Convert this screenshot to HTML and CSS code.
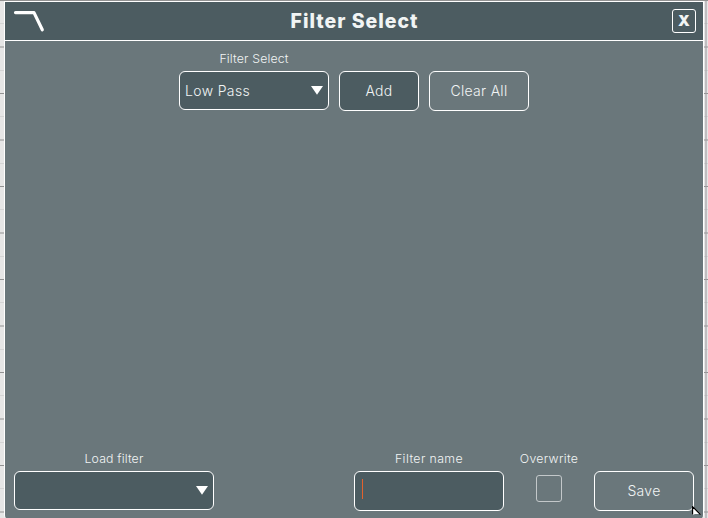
FILE: index.html
```html
<!DOCTYPE html>
<html lang="en">
<head>
<meta charset="utf-8">
<title>Filter Select</title>
<link rel="stylesheet" href="styles.css">
</head>
<body>
<main class="window">
  <header class="titlebar">
    <svg class="logo" width="32" height="24" viewBox="0 0 32 24"><path d="M2.5 3.6H21L29.3 20.8" fill="none" stroke="#fff" stroke-width="3.2" stroke-linecap="round" stroke-linejoin="round"/></svg>
    <h1 class="title">Filter Select</h1>
    <button class="close">X</button>
  </header>
  <section class="toolbar">
    <div class="field">
      <span class="label label-select">Filter Select</span>
      <div class="select select-type"><span class="value">Low Pass</span><svg class="arrow" width="12" height="9" viewBox="0 0 12 9"><path d="M0 0H12L6 8.8Z" fill="#fff"/></svg></div>
    </div>
    <button class="button button-add"><span class="add">Add</span></button>
    <button class="button button-clear"><span class="clear">Clear All</span></button>
  </section>
  <section class="footer">
    <div class="field load">
      <span class="label label-load">Load filter</span>
      <div class="select select-load"><svg class="arrow" width="12" height="9" viewBox="0 0 12 9"><path d="M0 0H12L6 8.8Z" fill="#fff"/></svg></div>
    </div>
    <div class="field name">
      <span class="label label-name">Filter name</span>
      <div class="input"><i class="caret"></i></div>
    </div>
    <div class="field overwrite">
      <span class="label label-over">Overwrite</span>
      <div class="checkbox"></div>
    </div>
    <button class="button button-save"><span class="save">Save</span></button>
  </section>
</main>
<svg class="cursor" width="10" height="13" viewBox="0 0 10 13"><path d="M.5 0V9L3 8H9Z" fill="#fff"/><path d="M.5 0V8.5M.5 .5L8.5 8.5" fill="none" stroke="#000" stroke-width="1.3"/></svg>
</body>
</html>
```
FILE: styles.css
```css
* { box-sizing: border-box; }
html { height: 100%; overflow: hidden; }
body {
  margin: 0;
  height: 518px;
  overflow: hidden;
  padding: 1px 4px 0;
  font-family: Inter, "Open Sans", sans-serif;
  font-weight: 350;
  color: #f1f4f4;
  background:
    linear-gradient(#929292, #929292) 0 0 / 100% 1px no-repeat,
    linear-gradient(90deg, transparent 705px, rgba(160,155,160,.55) 705px, rgba(160,155,160,.55) 707px, transparent 707px),
    repeating-linear-gradient(transparent 0 23px, #d5d5d5 23px 24px, transparent 24px 46px, #bcbcbc 46px 48px, transparent 48px 70px, #d5d5d5 70px 71px, transparent 71px 93px) 0 0,
    repeating-linear-gradient(#929292 0 1px, #e6e6e6 1px 93px);
}
.window {
  height: 518px;
  display: flex;
  flex-direction: column;
  border: 1px solid #fff;
  border-bottom: 0;
  border-radius: 0 0 4px 4px;
  background: #6a777b;
}
.titlebar {
  height: 39px;
  flex: none;
  display: grid;
  grid-template-columns: 40px 1fr 40px;
  align-items: center;
  padding: 0 7px 1px 8px;
  background: #4c5c61;
  border-bottom: 1px solid #fff;
}
.title {
  margin: 0;
  text-align: center;
  font-size: 19.5px;
  line-height: 24px;
  font-weight: 800;
  letter-spacing: 1px;
  white-space: nowrap;
}
.logo { display: block; }
button { font-family: inherit; font-weight: inherit; color: inherit; padding: 0; }
.close {
  justify-self: end;
  width: 24px;
  height: 24px;
  border: 1px solid #fff;
  border-radius: 3px;
  background: transparent;
  font-size: 15px;
  font-weight: 900;
  line-height: 20px;
}
.toolbar {
  display: flex;
  justify-content: center;
  align-items: flex-start;
  gap: 10px;
  padding-top: 9px;
}
.field { display: flex; flex-direction: column; align-items: center; }
.label {
  height: 21px;
  font-size: 12.3px;
  line-height: 17px;
  letter-spacing: .15px;
  white-space: nowrap;
}
.select, .input {
  display: flex;
  align-items: center;
  border: 1px solid #fff;
  border-radius: 6px;
  background: #4c5c61;
}
.select {
  height: 39px;
  justify-content: space-between;
  padding: 0 5px;
  font-size: 14px;
  letter-spacing: .35px;
}
.value { padding-bottom: 1px; }
.select-type { width: 150px; }
.select-load { width: 200px; }
.arrow { margin-left: auto; }
.button {
  height: 40px;
  margin-top: 21px;
  padding-bottom: 2px;
  border: 1px solid #fff;
  border-radius: 6px;
  background: transparent;
  font-size: 14px;
  letter-spacing: .3px;
}
.button-add { width: 80px; background: #4c5c61; }
.button-clear { width: 100px; }
.button-save { width: 100px; }
.footer {
  display: flex;
  align-items: flex-start;
  margin-top: auto;
  padding: 0 9px 8px;
}
.name { margin-left: 140px; }
.label-name { letter-spacing: .4px; }
.input { width: 150px; height: 40px; padding: 0 7px; }
.caret { width: 1px; height: 20px; margin-top: -4px; background: #e2622d; }
.overwrite { width: 90px; }
.label-over { letter-spacing: .3px; }
.checkbox {
  width: 26px;
  height: 27px;
  margin-top: 4px;
  border: 1px solid #c3c8ca;
  border-radius: 3px;
}
.cursor { position: absolute; left: 692px; top: 506px; }
```
